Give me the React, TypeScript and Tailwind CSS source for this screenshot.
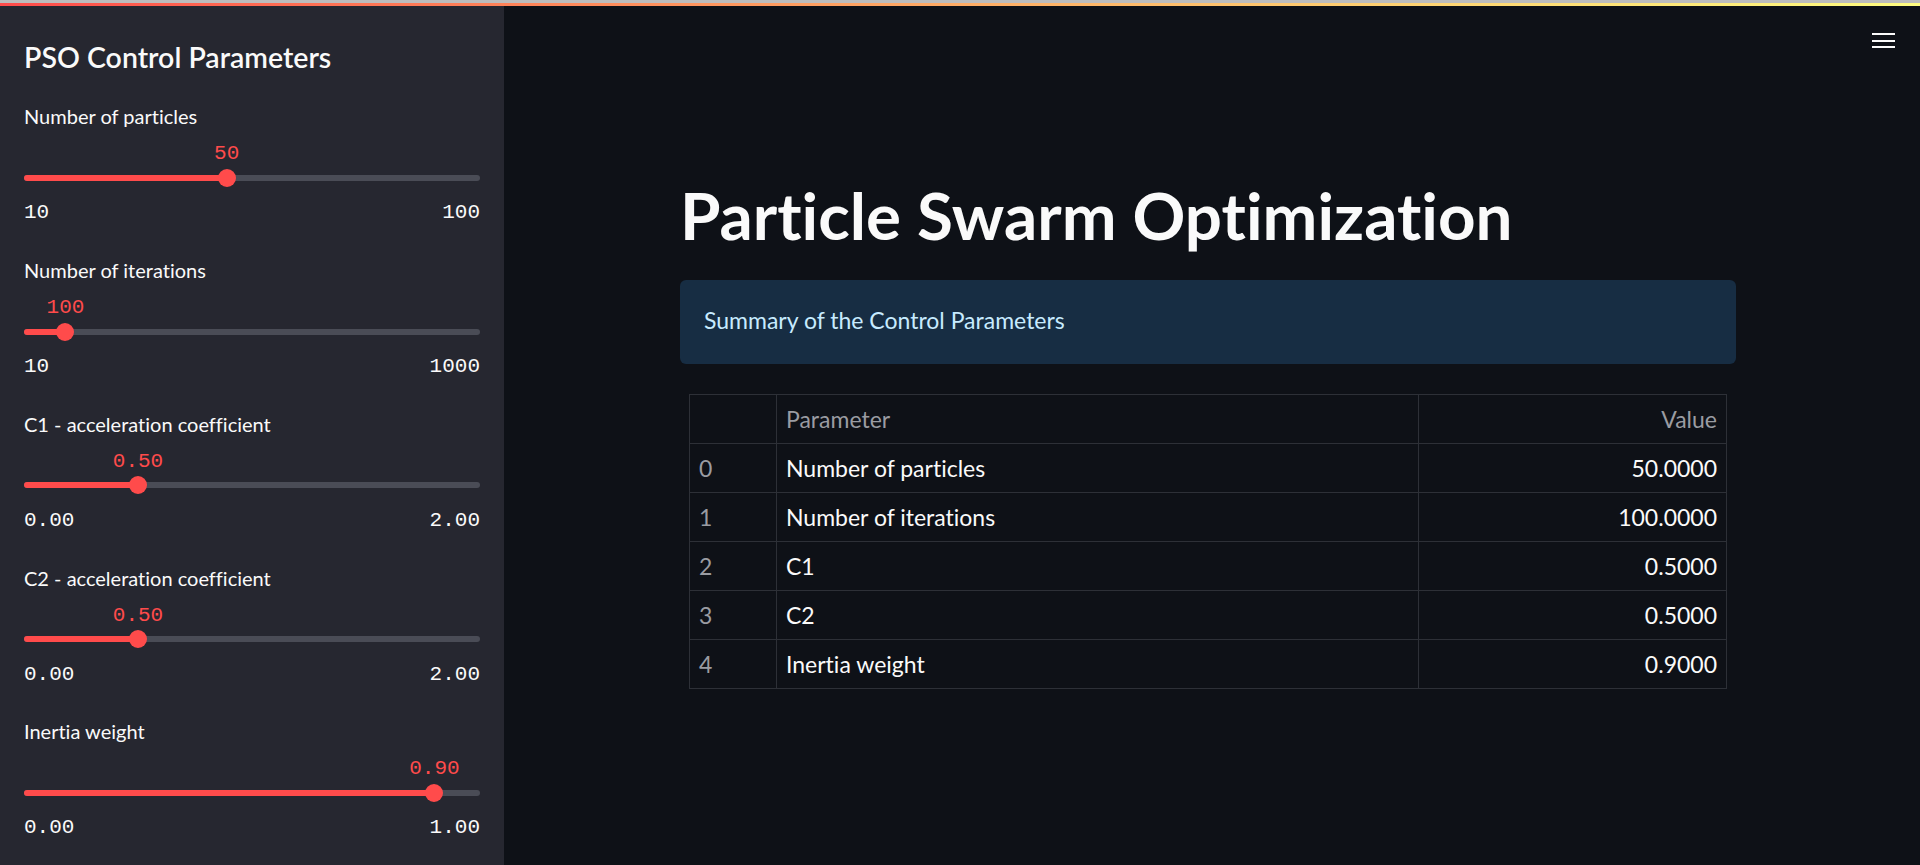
type SliderProps = {
  label: string;
  value: number;
  min: number;
  max: number;
  digits: number;
};

const sliders: SliderProps[] = [
  { label: "Number of particles", value: 50, min: 10, max: 100, digits: 0 },
  { label: "Number of iterations", value: 100, min: 10, max: 1000, digits: 0 },
  { label: "C1 - acceleration coefficient", value: 0.5, min: 0, max: 2, digits: 2 },
  { label: "C2 - acceleration coefficient", value: 0.5, min: 0, max: 2, digits: 2 },
  { label: "Inertia weight", value: 0.9, min: 0, max: 1, digits: 2 },
];

const rows = [
  ["0", "Number of particles", "50.0000"],
  ["1", "Number of iterations", "100.0000"],
  ["2", "C1", "0.5000"],
  ["3", "C2", "0.5000"],
  ["4", "Inertia weight", "0.9000"],
];

function Slider({ label, value, min, max, digits }: SliderProps) {
  const pct = ((value - min) / (max - min)) * 100;
  const fmt = (n: number) => n.toFixed(digits);

  return (
    <div className="h-[153.75px] shrink-0">
      <div className="h-[30px] text-[20px] leading-[30px] text-[#fafafa]">{label}</div>
      <div className="relative mt-[11px] h-[24px] font-['Liberation_Mono',monospace] text-[21px] leading-[24px]">
        <span
          className="absolute top-0 -translate-x-1/2 whitespace-nowrap text-[#ff4b4b]"
          style={{ left: `${pct}%` }}
        >
          {fmt(value)}
        </span>
      </div>
      <div className="relative mt-[2.6px] h-[18px]">
        <div className="absolute left-0 right-0 top-[6px] h-[6px] rounded-full bg-[#4a4c56]" />
        <div
          className="absolute left-0 top-[6px] h-[6px] rounded-full bg-[#ff4b4b]"
          style={{ width: `${pct}%` }}
        />
        <div
          className="absolute top-0 h-[18px] w-[18px] -translate-x-1/2 rounded-full bg-[#ff4b4b]"
          style={{ left: `${pct}%` }}
        />
      </div>
      <div className="mt-[14.4px] flex h-[24px] justify-between font-['Liberation_Mono',monospace] text-[21px] leading-[24px] text-[#fafafa]">
        <span>{fmt(min)}</span>
        <span>{fmt(max)}</span>
      </div>
    </div>
  );
}

export default function App() {
  return (
    <div className="relative flex h-[865px] w-[1920px] flex-col overflow-hidden bg-[#0e1117] font-['Lato',sans-serif] [font-variant-ligatures:none]">
      <div className="h-[3px] shrink-0 bg-[#bdbdbd]" />
      <div className="h-[3px] shrink-0 bg-gradient-to-r from-[#ff4b4b] to-[#fffd80]" />

      <div className="flex min-h-0 flex-1 overflow-hidden">
        <aside className="w-[504px] shrink-0 bg-[#262730] px-[24px] pt-[31px]">
          <h2 className="h-[40px] text-[28.5px] font-semibold leading-[40px] text-[#fafafa]">
            PSO Control Parameters
          </h2>
          <div className="mt-[24.3px]">
            {sliders.map((s) => (
              <Slider key={s.label} {...s} />
            ))}
          </div>
        </aside>

        <main className="flex-1 pl-[176px] pt-[168.5px]">
          <div className="w-[1056px]">
            <h1 className="h-[80px] text-[65.5px] font-bold leading-[80px] text-[#fafafa]">
              Particle Swarm Optimization
            </h1>
            <div className="mt-[25.5px] flex h-[84px] items-center rounded-[6px] bg-[#172d43] px-[24px] pb-[4px]">
              <span className="text-[23px] text-[#c7ebff]">Summary of the Control Parameters</span>
            </div>
            <div className="mt-[30px] px-[9px]">
              <table className="w-full border-collapse text-[23px]">
                <thead>
                  <tr className="h-[49px]">
                    <th className="w-[87px] border border-[#2d3037]" />
                    <th className="w-[642px] border border-[#2d3037] px-[9px] text-left font-normal text-[#9a9ca2]">
                      Parameter
                    </th>
                    <th className="border border-[#2d3037] px-[9px] text-right font-normal text-[#9a9ca2]">
                      Value
                    </th>
                  </tr>
                </thead>
                <tbody>
                  {rows.map(([i, name, val]) => (
                    <tr key={i} className="h-[49px]">
                      <td className="border border-[#2d3037] px-[9px] text-[#9a9ca2]">{i}</td>
                      <td className="border border-[#2d3037] px-[9px] text-[#fafafa]">{name}</td>
                      <td className="border border-[#2d3037] px-[9px] text-right text-[#fafafa]">
                        {val}
                      </td>
                    </tr>
                  ))}
                </tbody>
              </table>
            </div>
          </div>
        </main>
      </div>

      <button className="absolute right-[25px] top-[33px] flex w-[23px] flex-col gap-[4.5px]">
        <span className="h-[2px] bg-[#fafafa]" />
        <span className="h-[2px] bg-[#fafafa]" />
        <span className="h-[2px] bg-[#fafafa]" />
      </button>
    </div>
  );
}
